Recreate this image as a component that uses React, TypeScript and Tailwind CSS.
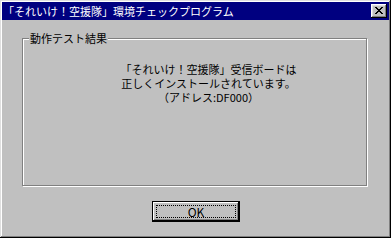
import React from 'react';

const bevelRaised =
  'shadow-[inset_-1px_-1px_0_#000,inset_1px_1px_0_#fff,inset_-2px_-2px_0_#808080,inset_2px_2px_0_#dfdfdf]';

const CloseButton: React.FC = () => (
  <button className={`w-[16px] h-[14px] bg-[#c0c0c0] flex items-center justify-center ${bevelRaised}`}>
    <svg width="8" height="7" viewBox="0 0 8 7" className="mb-[1px]">
      <path d="M0 0h2v1h1v1h2V1h1V0h2v1H7v1H6v1H5v1h1v1h1v1h1v1H6V6H5V5H3v1H2v1H0V6h1V5h1V4h1V3H2V2H1V1H0z" fill="#000" />
    </svg>
  </button>
);

export default function App() {
  return (
    <div className="w-[391px] h-[238px] bg-[#c0c0c0] p-[2px] flex flex-col font-['Noto_Sans_CJK_JP',sans-serif] text-black shadow-[inset_-1px_-1px_0_#000,inset_1px_1px_0_#dfdfdf,inset_-2px_-2px_0_#808080,inset_2px_2px_0_#fff]">
      {/* title bar */}
      <div className="h-[18px] bg-[#000080] flex items-center justify-between pl-[1px] pr-[2px]">
        <span className="text-white text-[11px] leading-none whitespace-nowrap">
          「それいけ！空援隊」環境チェックプログラム
        </span>
        <CloseButton />
      </div>

      {/* group box */}
      <div className="relative ml-[20px] mt-[18px] w-[345px] h-[148px] border border-[#808080] shadow-[1px_1px_0_#fff,inset_1px_1px_0_#fff]">
        <span className="absolute left-[6px] -top-[8px] px-[1px] bg-[#c0c0c0] text-[11px] leading-[14px]">
          動作テスト結果
        </span>
        <div className="pt-[23px] pl-[28px] text-center text-[11px] leading-[14px]">
          <p>「それいけ！空援隊」受信ボードは</p>
          <p>正しくインストールされています。</p>
          <p>（アドレス:DF000）</p>
        </div>
      </div>

      {/* OK */}
      <div className="flex justify-center mt-[15px] pl-[1px]">
        <button className="w-[88px] h-[21px] border border-black bg-[#c0c0c0] p-[3px] shadow-[inset_-1px_-1px_0_#000,inset_1px_1px_0_#fff,inset_-2px_-2px_0_#808080]">
          <div className="w-full h-full border border-dotted border-black flex items-center justify-center text-[12px] leading-none">
            OK
          </div>
        </button>
      </div>
    </div>
  );
}
